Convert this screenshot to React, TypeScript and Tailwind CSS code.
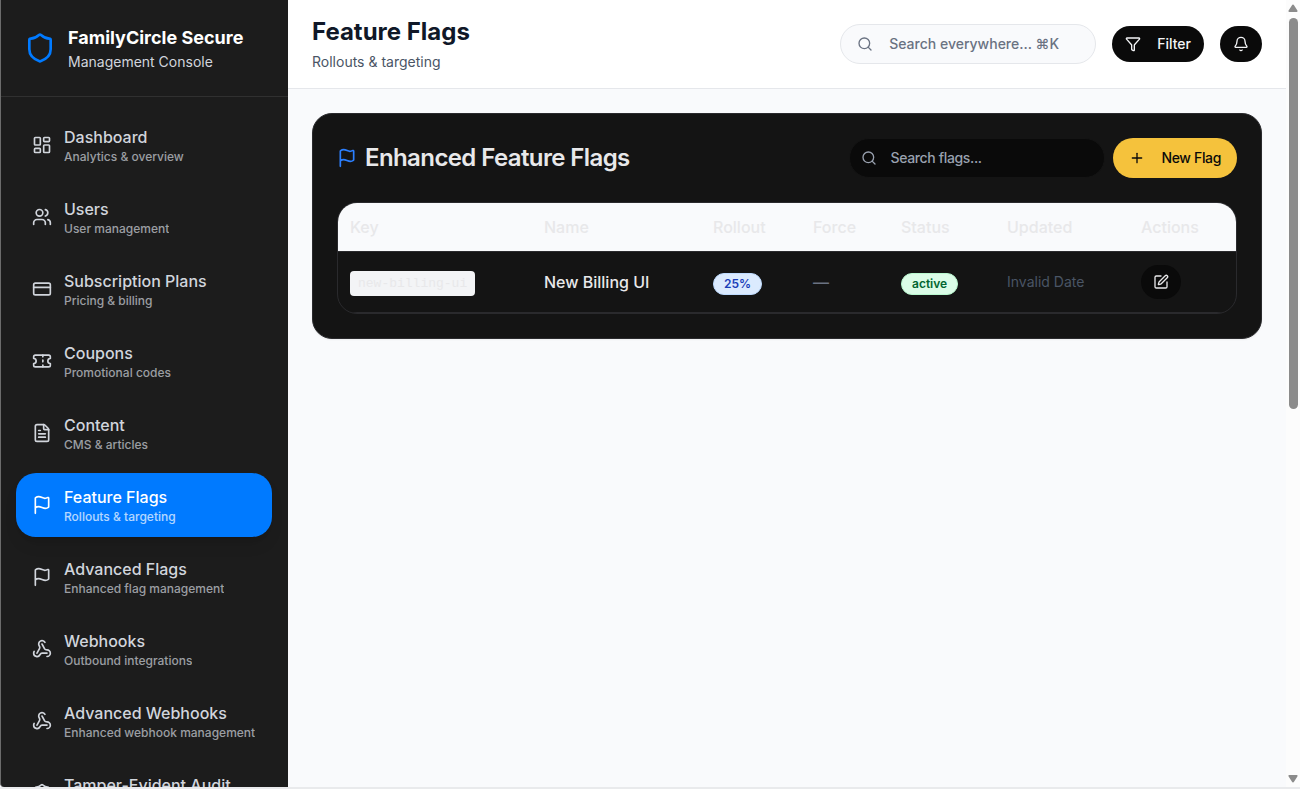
import React from "react";
import {
  Bell,
  CreditCard,
  FileText,
  Flag,
  Funnel,
  LayoutDashboard,
  Plus,
  Search,
  Shield,
  SquarePen,
  Ticket,
  Users,
  Webhook,
  type LucideIcon,
} from "lucide-react";

type NavItem = { label: string; hint?: string; icon: LucideIcon; active?: boolean };

const navItems: NavItem[] = [
  { label: "Dashboard", hint: "Analytics & overview", icon: LayoutDashboard },
  { label: "Users", hint: "User management", icon: Users },
  { label: "Subscription Plans", hint: "Pricing & billing", icon: CreditCard },
  { label: "Coupons", hint: "Promotional codes", icon: Ticket },
  { label: "Content", hint: "CMS & articles", icon: FileText },
  { label: "Feature Flags", hint: "Rollouts & targeting", icon: Flag, active: true },
  { label: "Advanced Flags", hint: "Enhanced flag management", icon: Flag },
  { label: "Webhooks", hint: "Outbound integrations", icon: Webhook },
  { label: "Advanced Webhooks", hint: "Enhanced webhook management", icon: Webhook },
  { label: "Tamper-Evident Audit", icon: Shield },
];

function NavLink({ item }: { item: NavItem }) {
  const Icon = item.icon;
  return (
    <a
      href="#"
      aria-current={item.active ? "page" : undefined}
      className={
        item.active
          ? "flex items-center gap-3 rounded-[20px] bg-[#007aff] px-4 py-3 text-white shadow-lg"
          : "flex items-center gap-3 rounded-[20px] px-4 py-3 text-gray-300"
      }
    >
      <Icon className="size-5 shrink-0" />
      <span className="min-w-0">
        <span className="block truncate text-base font-medium">{item.label}</span>
        <span className="block h-4 truncate text-xs font-medium opacity-70">{item.hint}</span>
      </span>
    </a>
  );
}

function Sidebar() {
  return (
    <aside className="flex w-72 shrink-0 flex-col overflow-hidden rounded-bl border-l border-[#6b6b6b] bg-[#1c1c1c]">
      <div className="flex items-center gap-3 border-b border-[#303030] py-6 pr-6 pl-[23px]">
        <Shield className="size-8 shrink-0 text-[#007aff]" />
        <div>
          <div className="text-lg leading-7 font-bold text-white">FamilyCircle Secure</div>
          <div className="text-sm text-gray-300">Management Console</div>
        </div>
      </div>
      <nav className="flex flex-col gap-2 py-4 pr-4 pl-[15px]">
        {navItems.map((item) => (
          <NavLink key={item.label} item={item} />
        ))}
      </nav>
    </aside>
  );
}

function TopBar() {
  return (
    <header className="flex items-center justify-between border-b border-gray-200 bg-white px-6 py-4">
      <div>
        <h1 className="mb-1 text-2xl font-bold text-gray-900">Feature Flags</h1>
        <p className="text-sm text-gray-600">Rollouts &amp; targeting</p>
      </div>
      <div className="flex items-center gap-4">
        <label className="flex h-10 w-64 items-center gap-4 rounded-[20px] border border-gray-200 bg-[#f9fafc] px-4">
          <Search className="size-4 shrink-0 text-gray-500" />
          <input
            type="text"
            aria-label="Search everywhere"
            placeholder="Search everywhere... ⌘K"
            className="w-full min-w-0 bg-transparent text-sm font-medium text-gray-900 outline-none placeholder:text-gray-500"
          />
        </label>
        <button className="flex h-9 items-center gap-4 rounded-[20px] bg-[#0a0a0a] px-[13px] text-sm font-medium text-gray-100">
          <Funnel className="size-4" />
          Filter
        </button>
        <button
          aria-label="Notifications"
          className="flex h-9 items-center rounded-[20px] bg-[#0a0a0a] px-[13px] text-gray-100"
        >
          <Bell className="size-4" />
        </button>
      </div>
    </header>
  );
}

function FlagsTable() {
  return (
    <div className="overflow-hidden rounded-[20px] border border-[#2a2a2d]">
      <table className="w-full text-left">
        <thead className="bg-[#f9fafc] text-[#e8e8ea]">
          <tr className="h-12 border-b border-[#2a2a2d]">
            <th className="w-[194px] px-3 font-medium">Key</th>
            <th className="w-[169px] px-3 font-medium">Name</th>
            <th className="w-[100px] px-3 font-medium">Rollout</th>
            <th className="w-[88px] px-3 font-medium">Force</th>
            <th className="w-[106px] px-3 font-medium">Status</th>
            <th className="w-[134px] px-3 font-medium">Updated</th>
            <th className="w-[107px] px-3 font-medium">Actions</th>
          </tr>
        </thead>
        <tbody>
          <tr className="h-[61px] border-b border-[#2a2a2d]">
            <td className="px-3 pt-0.5">
              <code className="inline-block rounded bg-gray-100 px-2 font-['Liberation_Mono',monospace] text-[13px] leading-[25px] whitespace-nowrap text-[#e8e8ea]">
                new-billing-ui
              </code>
            </td>
            <td className="px-3 font-medium whitespace-nowrap text-[#e8e8ea]">New Billing UI</td>
            <td className="px-3 pt-0.5">
              <span className="inline-flex rounded-full border border-blue-200 bg-blue-100 px-2.5 py-0.5 text-xs font-semibold text-blue-800">
                25%
              </span>
            </td>
            <td className="px-3 font-medium text-gray-500">—</td>
            <td className="px-3 pt-0.5">
              <span className="inline-flex rounded-full border border-green-200 bg-green-100 px-2.5 py-0.5 text-xs font-semibold text-green-800">
                active
              </span>
            </td>
            <td className="px-3 text-sm whitespace-nowrap text-gray-600">Invalid Date</td>
            <td className="px-3">
              <button
                aria-label="Edit new-billing-ui"
                className="flex h-[34px] w-10 items-center justify-center rounded-[20px] bg-[#0a0a0a] text-[#e8e8ea]"
              >
                <SquarePen className="size-4" />
              </button>
            </td>
          </tr>
        </tbody>
      </table>
    </div>
  );
}

function FlagsCard() {
  return (
    <section className="flex flex-col gap-6 rounded-[20px] border border-[#2a2a2d] bg-[#141414] p-6 shadow-xs">
      <div className="flex items-center justify-between">
        <h2 className="flex items-center gap-2 text-2xl font-semibold tracking-tight text-[#e8e8ea]">
          <Flag className="size-5 text-blue-500" />
          Enhanced Feature Flags
        </h2>
        <div className="flex items-center gap-2 tracking-tight">
          <label className="flex h-10 w-64 items-center gap-[13px] rounded-[20px] border border-[#141414] bg-[#0a0a0a] px-[11px]">
            <Search className="size-4 shrink-0 text-gray-400" />
            <input
              type="text"
              aria-label="Search flags"
              placeholder="Search flags..."
              className="w-full min-w-0 bg-transparent text-sm font-medium tracking-tight text-gray-100 outline-none placeholder:text-gray-400"
            />
          </label>
          <button className="flex h-10 items-center gap-4 rounded-[20px] bg-[#f5c23c] px-4 text-sm font-medium tracking-tight text-[#0a0a0a]">
            <Plus className="size-4" />
            New Flag
          </button>
        </div>
      </div>
      <FlagsTable />
    </section>
  );
}

function ScrollRail() {
  return (
    <div aria-hidden="true" className="flex w-3.5 shrink-0 flex-col items-center justify-between bg-[#fcfcfc] pt-1">
      <svg viewBox="0 0 10 8" className="h-2 w-2.5 shrink-0 fill-[#8b8b8b]">
        <path d="M5 0.5 C5.5 0.5 5.8 0.8 6 1.2 L9.4 6.6 C9.8 7.4 9.5 8 8.7 8 H1.3 C0.5 8 0.2 7.4 0.6 6.6 L4 1.2 C4.2 0.8 4.5 0.5 5 0.5 Z" />
      </svg>
      <div className="w-full grow px-[3px] py-1.5">
        <div className="h-[52%] w-[9px] rounded-full bg-[#8b8b8b]" />
      </div>
      <svg viewBox="0 0 10 8" className="mb-1 h-2 w-2.5 shrink-0 fill-[#8b8b8b]">
        <path d="M5 7.5 C5.5 7.5 5.8 7.2 6 6.8 L9.4 1.4 C9.8 0.6 9.5 0 8.7 0 H1.3 C0.5 0 0.2 0.6 0.6 1.4 L4 6.8 C4.2 7.2 4.5 7.5 5 7.5 Z" />
      </svg>
    </div>
  );
}

export default function App() {
  return (
    <div className="flex h-screen overflow-hidden border-b-2 border-[#e9eaec] bg-[#f9fafc] font-[Inter,sans-serif]">
      <Sidebar />
      <div className="min-w-0 grow">
        <TopBar />
        <main className="p-6">
          <FlagsCard />
        </main>
      </div>
      <ScrollRail />
    </div>
  );
}
